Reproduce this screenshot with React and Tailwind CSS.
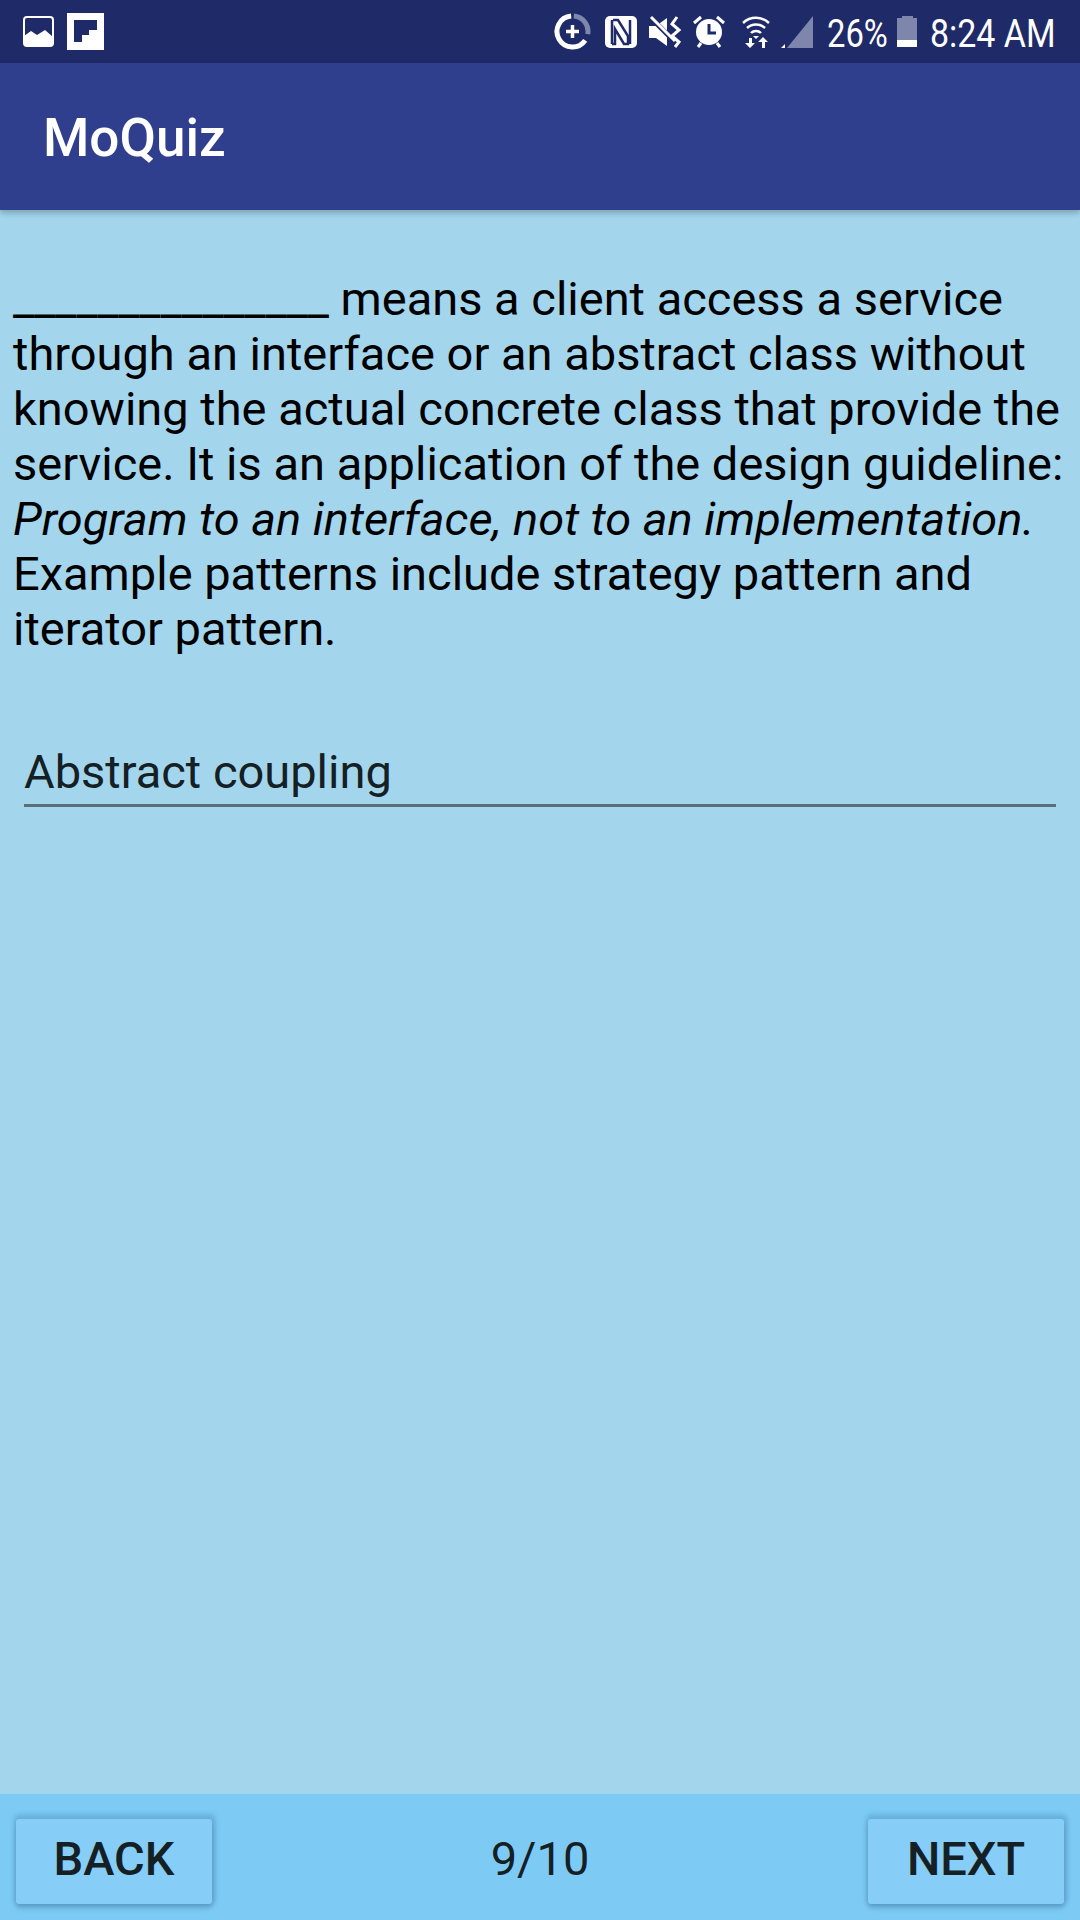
import React from "react";

const GalleryIcon = () => (
  <svg width="31" height="31" viewBox="0 0 31 31">
    <rect x="1" y="1" width="29" height="29" rx="3" fill="none" stroke="#fff" strokeWidth="2" />
    <path d="M1 20 L8 15 L14 19 L22 14 L30 21 V28 a2 2 0 0 1 -2 2 H3 a2 2 0 0 1 -2 -2 Z" fill="#fff" />
  </svg>
);

const FlipboardIcon = () => (
  <svg width="37" height="37" viewBox="0 0 37 37">
    <rect width="37" height="37" fill="#fff" />
    <path d="M7 7 H30 V17 H22 V22 H15 V29 H7 Z" fill="#1f2a68" />
  </svg>
);

const DataSaverIcon = () => (
  <svg width="37" height="37" viewBox="0 0 37 37">
    <path d="M19.85 3.06 A15.5 15.5 0 0 1 33.76 21.19" fill="none" stroke="#7f86ab" strokeWidth="5" />
    <path d="M31.2 27.39 A15.5 15.5 0 1 1 17.15 3.06" fill="none" stroke="#fff" strokeWidth="5" />
    <path d="M18.5 12 V25 M12 18.5 H25" stroke="#fff" strokeWidth="3.5" />
  </svg>
);

const NfcIcon = () => (
  <svg width="32" height="32" viewBox="0 0 32 32">
    <rect width="32" height="32" rx="5" fill="#fff" />
    <path d="M7 4 V28 M25 4 V28" stroke="#1f2a68" strokeWidth="2.5" />
    <path d="M8 4 H13 L23 20 V28 H19 L10 13 V28 H7" fill="none" stroke="#1f2a68" strokeWidth="2.5" />
  </svg>
);

const VibrateMuteIcon = () => (
  <svg width="34" height="34" viewBox="0 0 34 34">
    <path d="M1 11 H8 L19 3 V31 L8 23 H1 Z" fill="#fff" />
    <path d="M2 2 L27 27" stroke="#1f2a68" strokeWidth="5" />
    <path d="M3 2 L27 26" stroke="#fff" strokeWidth="3" />
    <path d="M29 2 L24 9 L31 15 L24 21 L31 27 L27 32" fill="none" stroke="#fff" strokeWidth="3" />
  </svg>
);

const AlarmIcon = () => (
  <svg width="32" height="33" viewBox="0 0 32 33">
    <circle cx="16" cy="17" r="13" fill="#fff" />
    <path d="M16 9 V18 H23" fill="none" stroke="#1f2a68" strokeWidth="3" />
    <path d="M1 8 L8 2 M31 8 L24 2 M5 32 L8 28 M27 32 L24 28" stroke="#fff" strokeWidth="3" />
  </svg>
);

const WifiIcon = () => (
  <svg width="28" height="34" viewBox="0 0 28 34">
    <path d="M1 8 A19 19 0 0 1 27 8 M5 13 A13 13 0 0 1 23 13 M9 18 A7 7 0 0 1 19 18" fill="none" stroke="#fff" strokeWidth="2.5" />
    <path d="M11 21 L14 24 L17 21 Z" fill="#fff" />
    <path d="M7 23 V28 H3 L8 33 L13 28 H10 V23 Z" fill="#fff" />
    <path d="M20 33 V27 H16 L21 22 L26 27 H23 V33 Z" fill="#fff" />
  </svg>
);

const SignalIcon = () => (
  <svg width="32" height="32" viewBox="0 0 32 32">
    <path d="M6 32 L32 0 V32 Z" fill="#7f86ab" />
    <path d="M0 32 L4 28 V32 Z" fill="#fff" />
  </svg>
);

const BatteryIcon = () => (
  <div className="flex flex-col items-center w-[20px]">
    <div className="w-[11px] h-[2px] bg-[#7f86ab]" />
    <div className="w-[20px] h-[22px] bg-[#7f86ab]" />
    <div className="w-[20px] h-[7px] bg-white" />
  </div>
);

export default function App() {
  return (
    <div className="flex flex-col w-[1080px] h-[1920px] bg-[#a3d6ec]" style={{ fontFamily: "Roboto, sans-serif" }}>
      {/* status bar */}
      <div className="flex items-center justify-between h-[63px] bg-[#1f2a68] pl-[23px] pr-[28px] text-white">
        <div className="flex items-center gap-[13px]">
          <GalleryIcon />
          <FlipboardIcon />
        </div>
        <div className="flex items-center">
          <div className="flex items-center gap-[11px]">
            <div className="flex mr-[3px]">
              <DataSaverIcon />
            </div>
            <NfcIcon />
            <VibrateMuteIcon />
            <div className="flex mr-[6px]">
              <AlarmIcon />
            </div>
            <WifiIcon />
            <SignalIcon />
          </div>
          <span className="ml-[14px] mt-[6px] w-[60px] text-[39px] leading-none whitespace-nowrap scale-x-[0.84] origin-left">26%</span>
          <div className="ml-[10px]">
            <BatteryIcon />
          </div>
          <span className="ml-[13px] mt-[6px] w-[122px] text-[39px] leading-none whitespace-nowrap scale-x-[0.87] origin-left">8:24 AM</span>
        </div>
      </div>

      {/* app bar */}
      <div className="flex items-center h-[147px] bg-[#303f8d] pl-[43px] pt-[5px] shadow-[0_3px_6px_rgba(0,0,0,0.25)] relative">
        <h1 className="text-[53px] font-medium text-white">MoQuiz</h1>
      </div>

      {/* question */}
      <div className="flex-1 px-[13px] pt-[61px]">
        <p className="text-[47px] leading-[55px] text-black">
          <span className="tracking-[-0.15px]">_______________</span> means a client access a service through an interface or an abstract class without knowing the actual concrete class that provide the service. It is an application of the design guideline: <em>Program to an interface, not to an implementation.</em> Example patterns include strategy pattern and iterator pattern.
        </p>
        <div className="mt-[86px] mx-[11px] border-b-[3px] border-[#5a6e7b] pb-[2px] text-[47px] leading-[60px] text-[#152024]">
          Abstract coupling
        </div>
      </div>

      {/* bottom bar */}
      <div className="flex items-center justify-between h-[126px] bg-[#7dcbf5] px-[16px] pt-[25px] pb-[16px]">
        <button className="w-[196px] h-[85px] pb-[4px] rounded-[3px] bg-[#86cdf7] text-[47px] font-medium text-[#152024] shadow-[1px_-2px_4px_3px_rgba(60,120,165,0.3),0_4px_5px_rgba(50,100,140,0.35)]">
          BACK
        </button>
        <span className="mb-[5px] text-[47px] text-[#152024]">9/10</span>
        <button className="w-[196px] h-[85px] pb-[4px] rounded-[3px] bg-[#86cdf7] text-[47px] font-medium text-[#152024] shadow-[1px_-2px_4px_3px_rgba(60,120,165,0.3),0_4px_5px_rgba(50,100,140,0.35)]">
          NEXT
        </button>
      </div>
    </div>
  );
}
